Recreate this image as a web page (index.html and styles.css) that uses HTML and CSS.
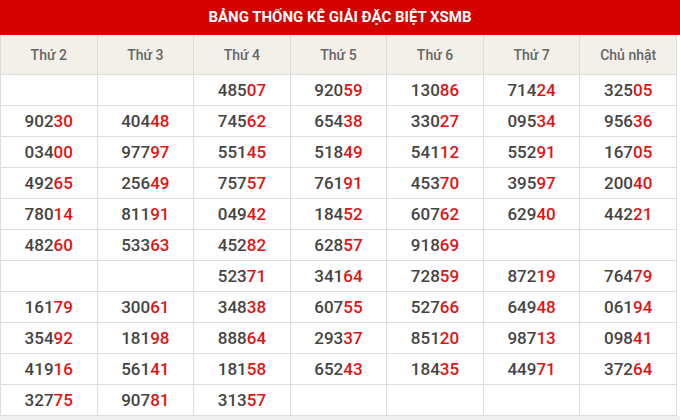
FILE: index.html
```html
<!DOCTYPE html>
<html lang="vi">
<head>
<meta charset="utf-8">
<link rel="stylesheet" href="styles.css">
</head>
<body>
<div class="wrap">
  <h2 class="title">BẢNG THỐNG KÊ GIẢI ĐẶC BIỆT XSMB</h2>
  <table class="stats">
    <thead>
      <tr><th>Thứ 2</th><th>Thứ 3</th><th>Thứ 4</th><th>Thứ 5</th><th>Thứ 6</th><th>Thứ 7</th><th>Chủ nhật</th></tr>
    </thead>
    <tbody>
      <tr><td></td><td></td><td>485<b>07</b></td><td>920<b>59</b></td><td>130<b>86</b></td><td>714<b>24</b></td><td>325<b>05</b></td></tr>
      <tr><td>902<b>30</b></td><td>404<b>48</b></td><td>745<b>62</b></td><td>654<b>38</b></td><td>330<b>27</b></td><td>095<b>34</b></td><td>956<b>36</b></td></tr>
      <tr><td>034<b>00</b></td><td>977<b>97</b></td><td>551<b>45</b></td><td>518<b>49</b></td><td>541<b>12</b></td><td>552<b>91</b></td><td>167<b>05</b></td></tr>
      <tr><td>492<b>65</b></td><td>256<b>49</b></td><td>757<b>57</b></td><td>761<b>91</b></td><td>453<b>70</b></td><td>395<b>97</b></td><td>200<b>40</b></td></tr>
      <tr><td>780<b>14</b></td><td>811<b>91</b></td><td>049<b>42</b></td><td>184<b>52</b></td><td>607<b>62</b></td><td>629<b>40</b></td><td>442<b>21</b></td></tr>
      <tr><td>482<b>60</b></td><td>533<b>63</b></td><td>452<b>82</b></td><td>628<b>57</b></td><td>918<b>69</b></td><td></td><td></td></tr>
      <tr><td></td><td></td><td>523<b>71</b></td><td>341<b>64</b></td><td>728<b>59</b></td><td>872<b>19</b></td><td>764<b>79</b></td></tr>
      <tr><td>161<b>79</b></td><td>300<b>61</b></td><td>348<b>38</b></td><td>607<b>55</b></td><td>527<b>66</b></td><td>649<b>48</b></td><td>061<b>94</b></td></tr>
      <tr><td>354<b>92</b></td><td>181<b>98</b></td><td>888<b>64</b></td><td>293<b>37</b></td><td>851<b>20</b></td><td>987<b>13</b></td><td>098<b>41</b></td></tr>
      <tr><td>419<b>16</b></td><td>561<b>41</b></td><td>181<b>58</b></td><td>652<b>43</b></td><td>184<b>35</b></td><td>449<b>71</b></td><td>372<b>64</b></td></tr>
      <tr><td>327<b>75</b></td><td>907<b>81</b></td><td>313<b>57</b></td><td></td><td></td><td></td><td></td></tr>
    </tbody>
  </table>
</div>
</body>
</html>
```
FILE: styles.css
```css
html, body {
  margin: 0;
  padding: 0;
  background: #f0f0f0;
}
body {
  font-family: Roboto, "Liberation Sans", Arial, sans-serif;
  width: 680px;
  height: 420px;
  overflow: hidden;
}
.wrap {
  background: #fff;
}
.title {
  margin: 0;
  height: 35px;
  line-height: 35px;
  background: #d50000;
  color: #fff;
  font-size: 15px;
  font-weight: 700;
  text-align: center;
}
.stats {
  width: 677px;
  border-collapse: collapse;
  table-layout: fixed;
  background: #fff;
}
.stats th {
  height: 39px;
  padding: 0;
  background: #f3efe9;
  color: #666;
  font-size: 14px;
  font-weight: 500;
  border: 1px solid #ddd;
  border-top: none;
}
.stats td {
  height: 30px;
  padding: 0;
  text-align: center;
  border: 1px solid #ddd;
  color: #444;
  font-size: 17px;
  font-weight: 500;
}
.stats td b {
  color: #e31212;
  font-weight: 500;
}
```
